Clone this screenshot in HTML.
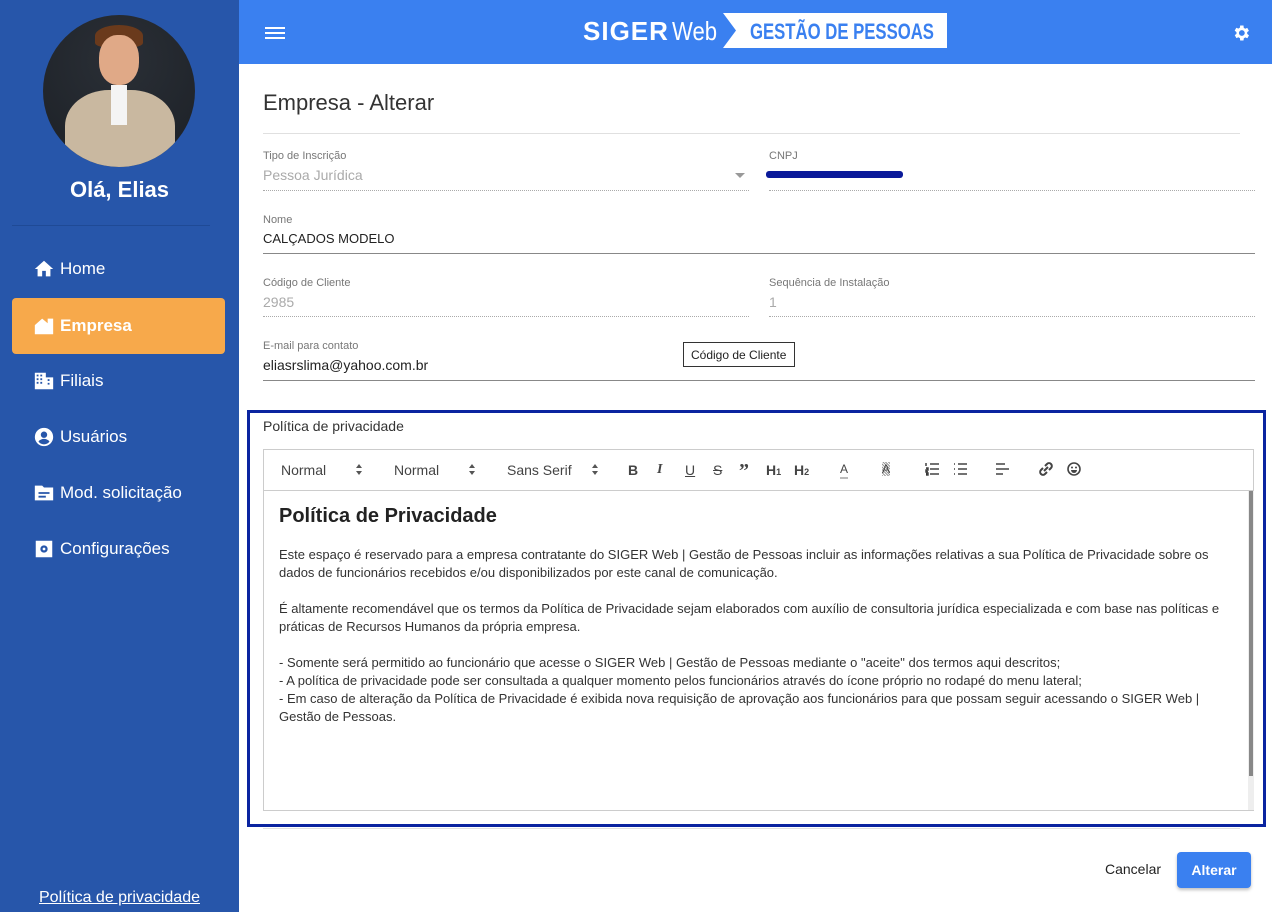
<!DOCTYPE html>
<html><head><meta charset="utf-8"><style>
*{box-sizing:border-box;margin:0;padding:0}
body{width:1272px;height:912px;overflow:hidden;font-family:"Liberation Sans",Arial,sans-serif;background:#fff;position:relative}
.side{position:absolute;left:0;top:0;width:239px;height:912px;background:#2756aa;color:#fff}
.av{position:absolute;left:43px;top:15px;width:152px;height:152px;border-radius:50%;background:radial-gradient(circle at 50% 30%,#2a2f36,#1c2026);overflow:hidden}
.hello{position:absolute;top:177px;width:239px;text-align:center;font-size:22px;font-weight:bold}
.sep{position:absolute;left:12px;top:225px;width:198px;height:1px;background:#1f4a96}
.item{position:absolute;left:12px;width:213px;height:56px;display:flex;align-items:center;padding-left:21px;font-size:17px;border-radius:4px}
.item svg{width:22px;height:22px;margin-right:5px;fill:#fff}
.act{background:#f7a94b;font-weight:bold}
.pp{position:absolute;bottom:5px;width:239px;text-align:center;font-size:16px;text-decoration:underline}
.top{position:absolute;left:239px;top:0;width:1033px;height:64px;background:#3a80f0}
.f{position:absolute;font-size:11px;color:#777}
.v{position:absolute;font-size:14px}
.dot{position:absolute;height:1px;border-bottom:1px dotted #aaa}
.ln{position:absolute;height:1px;background:#888}
.tb span{position:absolute;top:462px;font-size:14px;color:#444}
.tb svg{position:absolute;top:462px}
.ed p{font-size:13px;color:#333;line-height:18px}
</style></head><body>
<div class="side">
 <div class="av">
  <div style="position:absolute;left:52px;top:10px;width:48px;height:22px;background:#6a3a1c;border-radius:50% 50% 20% 20%"></div>
  <div style="position:absolute;left:56px;top:20px;width:40px;height:50px;background:#e0a987;border-radius:45%"></div>
  <div style="position:absolute;left:22px;top:75px;width:110px;height:90px;background:#c9b8a0;border-radius:40% 40% 0 0"></div>
  <div style="position:absolute;left:68px;top:70px;width:16px;height:40px;background:#f4f4f4"></div>
 </div>
 <div class="hello">Olá, Elias</div>
 <div class="sep"></div>
 <div class="item" style="top:241px"><svg viewBox="0 0 24 24"><path d="M10 20v-6h4v6h5v-8h3L12 3 2 12h3v8z"/></svg>Home</div>
 <div class="item act" style="top:298px"><svg viewBox="0 0 24 24"><path d="M2 11l8-7 6 5V4h6v17H2zM6 21v-6h6v6zM18 10h2v2h-2zM18 14h2v2h-2z"/></svg>Empresa</div>
 <div class="item" style="top:353px"><svg viewBox="0 0 24 24"><path d="M2 3h12v18H2zM14 8h8v13h-8zM4 5h2v2H4zm4 0h2v2H8zM4 9h2v2H4zm4 0h2v2H8zM4 13h2v2H4zm4 0h2v2H8zm8-3h2v2h-2zm0 4h2v2h-2z" fill-rule="evenodd"/></svg>Filiais</div>
 <div class="item" style="top:409px"><svg viewBox="0 0 24 24"><path d="M12 2a10 10 0 100 20 10 10 0 000-20zm0 4a3.5 3.5 0 110 7 3.5 3.5 0 010-7zm0 14a8 8 0 01-6-3c1-2 4-3 6-3s5 1 6 3a8 8 0 01-6 3z"/></svg>Usuários</div>
 <div class="item" style="top:465px"><svg viewBox="0 0 24 24"><path d="M2 4h8l2 2h10v14H2zM6 11h12v2H6zm0 4h8v2H6z" fill-rule="evenodd"/></svg>Mod. solicitação</div>
 <div class="item" style="top:521px"><svg viewBox="0 0 24 24"><path d="M3 3h18v18H3zm9 5a4 4 0 100 8 4 4 0 000-8zm0 2.5a1.5 1.5 0 110 3 1.5 1.5 0 010-3z" fill-rule="evenodd"/></svg>Configurações</div>
 <div class="pp">Política de privacidade</div>
</div>
<div class="top">
 <div style="position:absolute;left:26px;top:27px;width:20px;height:2px;background:#fff;box-shadow:0 5px #fff,0 10px #fff"></div>
 <div style="position:absolute;left:344px;top:16px;color:#fff;font-size:26px;line-height:30px;white-space:nowrap"><b style="letter-spacing:1px">SIGER</b><span style="display:inline-block;transform:scaleX(0.85);transform-origin:left;margin-left:3px">Web</span></div>
 <div style="position:absolute;left:484px;top:13px;width:224px;height:35px;background:#fff;clip-path:polygon(0 0,100% 0,100% 100%,0 100%,13px 50%)"></div>
 <div style="position:absolute;left:511px;top:18px;color:#3a80f0;font-size:22px;font-weight:bold;line-height:28px;white-space:nowrap;transform:scaleX(0.76);transform-origin:left">GESTÃO DE PESSOAS</div>
 <svg style="position:absolute;left:992px;top:23px" width="20" height="20" viewBox="0 0 24 24" fill="#fff"><path d="M19.4 13a7.5 7.5 0 000-2l2.1-1.6-2-3.5-2.5 1a7 7 0 00-1.7-1L15 3h-4l-.4 2.7a7 7 0 00-1.7 1l-2.5-1-2 3.5L6.6 11a7.5 7.5 0 000 2l-2.1 1.6 2 3.5 2.5-1a7 7 0 001.7 1L11 21h4l.4-2.7a7 7 0 001.7-1l2.5 1 2-3.5zM13 15.5a3.5 3.5 0 110-7 3.5 3.5 0 010 7z"/></svg>
</div>
<div style="position:absolute;left:263px;top:90px;font-size:22px;color:#333">Empresa - Alterar</div>
<div style="position:absolute;left:263px;top:133px;width:977px;height:1px;background:#e0e0e0"></div>
<div class="f" style="left:263px;top:150px">Tipo de Inscrição</div>
<div class="v" style="left:263px;top:167px;color:#aaa">Pessoa Jurídica</div>
<div style="position:absolute;left:735px;top:173px;border:5px solid transparent;border-top-color:#999"></div>
<div class="dot" style="left:263px;top:190px;width:486px"></div>
<div class="f" style="left:769px;top:150px">CNPJ</div>
<div style="position:absolute;left:766px;top:171px;width:137px;height:7px;background:#0a1a9a;border-radius:3px"></div>
<div class="dot" style="left:769px;top:190px;width:486px"></div>
<div class="f" style="left:263px;top:214px">Nome</div>
<div class="v" style="left:263px;top:231px;color:#222;font-size:13px">CALÇADOS MODELO</div>
<div class="ln" style="left:263px;top:253px;width:992px"></div>
<div class="f" style="left:263px;top:277px">Código de Cliente</div>
<div class="v" style="left:263px;top:294px;color:#aaa">2985</div>
<div class="dot" style="left:263px;top:316px;width:486px"></div>
<div class="f" style="left:769px;top:277px">Sequência de Instalação</div>
<div class="v" style="left:769px;top:294px;color:#aaa">1</div>
<div class="dot" style="left:769px;top:316px;width:486px"></div>
<div class="f" style="left:263px;top:340px">E-mail para contato</div>
<div class="v" style="left:263px;top:357px;color:#222">eliasrslima@yahoo.com.br</div>
<div class="ln" style="left:263px;top:380px;width:992px"></div>
<div style="position:absolute;left:683px;top:342px;width:112px;height:25px;border:1px solid #333;background:#fff;font-size:12px;color:#222;padding:5px 0 0 7px">Código de Cliente</div>

<div style="position:absolute;left:247px;top:410px;width:1019px;height:417px;border:3px solid #0a24a0"></div>
<div style="position:absolute;left:263px;top:418px;font-size:14px;color:#333">Política de privacidade</div>
<div style="position:absolute;left:263px;top:449px;width:991px;height:362px;border:1px solid #ccc"></div>
<div style="position:absolute;left:264px;top:490px;width:989px;height:1px;background:#ccc"></div>
<div class="tb">
 <span style="left:281px">Normal</span>
 <svg style="left:356px;top:464px" width="6" height="11" viewBox="0 0 6 11" fill="#555"><path d="M0 4L3 0 6 4zM0 7h6L3 11z"/></svg>
 <span style="left:394px">Normal</span>
 <svg style="left:469px;top:464px" width="6" height="11" viewBox="0 0 6 11" fill="#555"><path d="M0 4L3 0 6 4zM0 7h6L3 11z"/></svg>
 <span style="left:507px">Sans Serif</span>
 <svg style="left:592px;top:464px" width="6" height="11" viewBox="0 0 6 11" fill="#555"><path d="M0 4L3 0 6 4zM0 7h6L3 11z"/></svg>
 <span style="left:628px;font-weight:bold">B</span>
 <span style="left:657px;font-style:italic;font-family:'Liberation Serif',serif;font-weight:bold">I</span>
 <span style="left:685px;text-decoration:underline">U</span>
 <span style="left:713px;text-decoration:line-through">S</span>
 <span style="left:739px;font-weight:bold;font-size:20px;top:460px;font-family:'Liberation Serif',serif">”</span>
 <span style="left:766px;font-weight:bold">H<small style="font-size:9px">1</small></span>
 <span style="left:794px;font-weight:bold">H<small style="font-size:9px">2</small></span>
 <span style="left:840px;font-size:12px;border-bottom:2px solid #bbb;line-height:15px">A</span>
 <span style="left:882px;font-size:12px;background:repeating-linear-gradient(45deg,#999 0 1px,#fff 1px 2px)">A</span>
 <svg style="left:925px" width="14" height="14" viewBox="0 0 14 14" stroke="#444" stroke-width="1.5"><path d="M5 2h9M5 7h9M5 12h9M1 1v3M1 6h2v2H1v2h2M1 11h2v2H1"/></svg>
 <svg style="left:953px" width="14" height="14" viewBox="0 0 14 14" stroke="#444" stroke-width="1.5"><path d="M5 2h9M5 7h9M5 12h9M1 2h1M1 7h1M1 12h1"/></svg>
 <svg style="left:996px" width="14" height="14" viewBox="0 0 14 14" stroke="#444" stroke-width="1.5"><path d="M0 2h9M0 7h13M0 12h7"/></svg>
 <svg style="left:1039px" width="14" height="14" viewBox="0 0 14 14" stroke="#444" stroke-width="2" fill="none"><path d="M6 4l2-2a2.5 2.5 0 014 4l-2 2M8 10l-2 2a2.5 2.5 0 01-4-4l2-2M5 9l4-4"/></svg>
 <svg style="left:1067px" width="14" height="14" viewBox="0 0 14 14"><circle cx="7" cy="7" r="6" fill="none" stroke="#444" stroke-width="1.6"/><circle cx="5" cy="5.5" r="1" fill="#444"/><circle cx="9" cy="5.5" r="1" fill="#444"/><path d="M4 8h6a3 3 0 01-6 0z" fill="#444"/></svg>
</div>
<div style="position:absolute;left:1248px;top:491px;width:6px;height:319px;background:#eee"></div>
<div style="position:absolute;left:1249px;top:491px;width:4px;height:285px;background:#888"></div>
<div class="ed" style="position:absolute;left:279px;top:505px;width:960px">
 <div style="font-size:20px;font-weight:bold;color:#222;margin-bottom:18px">Política de Privacidade</div>
 <p>Este espaço é reservado para a empresa contratante do SIGER Web | Gestão de Pessoas incluir as informações relativas a sua Política de Privacidade sobre os dados de funcionários recebidos e/ou disponibilizados por este canal de comunicação.</p>
 <p>&nbsp;</p>
 <p>É altamente recomendável que os termos da Política de Privacidade sejam elaborados com auxílio de consultoria jurídica especializada e com base nas políticas e práticas de Recursos Humanos da própria empresa.</p>
 <p>&nbsp;</p>
 <p>- Somente será permitido ao funcionário que acesse o SIGER Web | Gestão de Pessoas mediante o "aceite" dos termos aqui descritos;</p>
 <p>- A política de privacidade pode ser consultada a qualquer momento pelos funcionários através do ícone próprio no rodapé do menu lateral;</p>
 <p>- Em caso de alteração da Política de Privacidade é exibida nova requisição de aprovação aos funcionários para que possam seguir acessando o SIGER Web | Gestão de Pessoas.</p>
</div>
<div style="position:absolute;left:263px;top:828px;width:977px;height:1px;background:#e0e0e0"></div>
<div style="position:absolute;left:1105px;top:861px;font-size:14px;color:#222">Cancelar</div>
<div style="position:absolute;left:1177px;top:852px;width:74px;height:36px;background:#3a80f0;border-radius:4px;color:#fff;font-weight:bold;font-size:14px;text-align:center;line-height:36px;box-shadow:0 2px 3px rgba(0,0,0,.25)">Alterar</div>
</body></html>
